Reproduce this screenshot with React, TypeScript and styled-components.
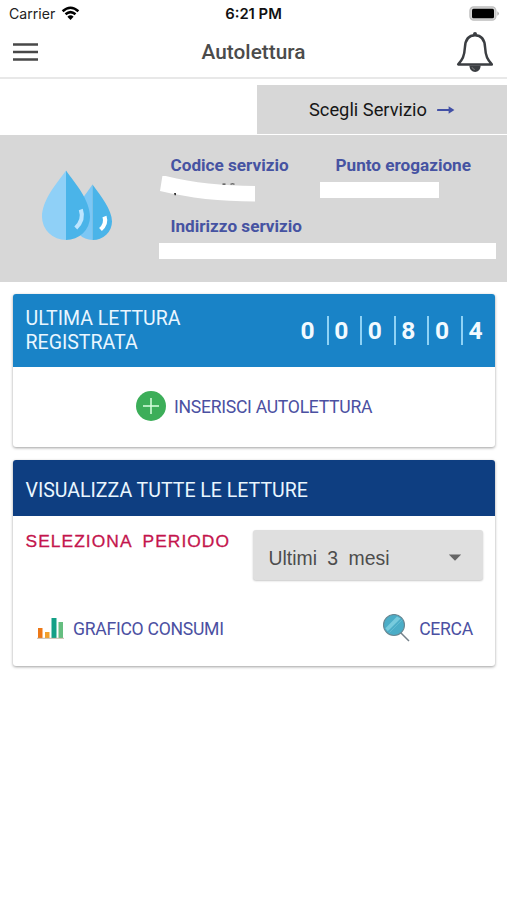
import React from "react";
import styled, { createGlobalStyle } from "styled-components";

const GlobalStyle = createGlobalStyle`
  * { box-sizing: border-box; }
  html, body { margin: 0; padding: 0; background: #fff; }
  body { font-family: Roboto, sans-serif; overflow: hidden; }
  svg { display: block; flex: none; }
`;

const Screen = styled.main`
  width: 507px;
  height: 900px;
  background: #fff;
  overflow: hidden;
`;

const StatusBar = styled.div`
  display: grid;
  grid-template-columns: 1fr auto 1fr;
  align-items: center;
  height: 27px;
  padding: 0 7px 0 9px;
  font-family: Inter, sans-serif;
  font-size: 14.1px;
  color: #222;
`;

const Carrier = styled.div`
  display: flex;
  align-items: center;
  gap: 6px;
`;

const Clock = styled.div`
  padding-right: 2px;
  font-size: 14.8px;
  font-weight: 600;
  color: #111;
`;

const BatterySlot = styled.div`
  display: flex;
  justify-content: flex-end;
`;

const Header = styled.header`
  display: grid;
  grid-template-columns: 1fr auto 1fr;
  align-items: center;
  height: 52px;
  padding: 0 13px;
  border-bottom: 2px solid #e8e8e8;
`;

const Title = styled.h1`
  margin: 0;
  font-size: 20.8px;
  line-height: 24px;
  font-weight: 500;
  color: #4b4b4b;
`;

const PlainButton = styled.button`
  display: flex;
  align-items: center;
  padding: 0;
  border: 0;
  background: none;
  font: inherit;
`;

const BellButton = styled(PlainButton)`
  justify-self: end;
`;

const ServiceButton = styled(PlainButton)`
  width: 250px;
  height: 49px;
  margin: 6px 0 0 auto;
  padding-left: 52px;
  gap: 10px;
  background: #d7d7d7;
  font-size: 18.3px;
  color: #161616;
`;

const ServicePanel = styled.section`
  display: flex;
  height: 147px;
  margin-top: 1px;
  background: #d7d7d7;
`;

const DropsSlot = styled.div`
  width: 158px;
  padding: 35px 0 0 41px;
`;

const ServiceInfo = styled.div`
  display: grid;
  grid-template-columns: 161px 176px;
  grid-template-rows: 61px 61px;
  padding-top: 19px;
`;

const Field = styled.div<{ $wide?: boolean; $indent: number }>`
  grid-column: ${(p) => (p.$wide ? "1 / 3" : "auto")};
  & > span {
    display: block;
    padding-left: ${(p) => p.$indent}px;
    line-height: 22px;
    font-size: 17.15px;
    font-weight: 700;
    color: #4653a2;
    white-space: nowrap;
  }
`;

const Redaction = styled.div<{ $w: number; $gap: number; $left: number }>`
  width: ${(p) => p.$w}px;
  height: 16px;
  margin: ${(p) => p.$gap}px 0 0 ${(p) => p.$left}px;
  background: #fff;
`;

const Card = styled.section<{ $height: number }>`
  width: 482px;
  height: ${(p) => p.$height}px;
  margin: 12px 0 0 13px;
  border-radius: 3px;
  background: #fff;
  overflow: hidden;
  box-shadow: 0 1px 3px rgba(0, 0, 0, 0.38);
  & + & { margin-top: 13px; }
`;

const CardHeader = styled.header<{ $bg: string; $height: number; $drop: number }>`
  display: flex;
  align-items: center;
  justify-content: space-between;
  height: ${(p) => p.$height}px;
  padding: ${(p) => p.$drop}px 12px 0 12.5px;
  background: ${(p) => p.$bg};
  color: #e9f6ff;
  font-size: 19.55px;
  line-height: 24.5px;
`;

const HeaderText = styled.div<{ $width: number }>`
  width: ${(p) => p.$width}px;
  padding-top: 1px;
`;

const Counter = styled.div`
  display: flex;
  align-items: center;
`;

const Digit = styled.span`
  width: 33.6px;
  height: 29px;
  padding-left: 5.5px;
  border-left: 2px solid #8ed2f5;
  font-size: 24.6px;
  line-height: 29px;
  font-weight: 700;
  color: #f2faff;
  &:first-child { border-left-color: transparent; }
  &:last-child { width: 22px; }
`;

const ActionButton = styled(PlainButton)<{ $gap: number }>`
  gap: ${(p) => p.$gap}px;
  font-size: 17.6px;
  letter-spacing: -0.28px;
  line-height: 22px;
  color: #4b50a2;
  white-space: nowrap;
  & > span { padding-top: 2px; }
`;

const InsertRow = styled.div`
  display: flex;
  height: 78px;
  padding-left: 122px;
`;

const PeriodRow = styled.div`
  display: flex;
  justify-content: space-between;
  height: 79px;
  padding: 14px 12px 0 12.5px;
`;

const PeriodLabel = styled.label`
  font-family: "Liberation Sans", sans-serif;
  font-size: 17.4px;
  line-height: 23px;
  letter-spacing: 1.05px;
  word-spacing: 5px;
  color: #c4154d;
  -webkit-text-stroke: 0.3px #c4154d;
  white-space: nowrap;
`;

const PeriodSelect = styled(PlainButton)`
  justify-content: space-between;
  width: 230px;
  height: 50px;
  padding: 4px 21px 0 15.5px;
  border-radius: 3px;
  background: #dfdfdf;
  box-shadow: 0 1px 2px rgba(0, 0, 0, 0.22);
  font-family: "Liberation Sans", sans-serif;
  font-size: 19.4px;
  word-spacing: 5px;
  color: #4d4d4d;
  & > span { padding-top: 2px; }
`;

const FooterRow = styled.div`
  display: flex;
  justify-content: space-between;
  height: 66px;
  padding: 0 22px 0 24px;
`;

const WifiIcon = () => (
  <svg width="19" height="15" viewBox="0 0 19 15">
    <path d="M1.6 5.2Q9.5-1.7 17.4 5.2M4.5 8.3q5-4.3 10 0" fill="none" stroke="#000" strokeWidth="2.5" />
    <path d="M6.4 10.7q3.1-2.7 6.2 0L9.5 14Z" />
  </svg>
);

const BatteryIcon = () => (
  <svg width="31" height="15" viewBox="0 0 31 15">
    <rect x=".9" y=".9" width="26" height="13.2" rx="3.8" fill="#d4d4d4" stroke="#bdbdbd" strokeWidth="1.2" />
    <rect x="3" y="2.8" width="22" height="9.4" rx="1.5" />
    <path d="M28.4 5.2q3 2.3 0 4.6Z" fill="#aaa" />
  </svg>
);

const MenuIcon = () => (
  <svg width="25" height="20" viewBox="0 0 25 20">
    <path d="M0 2.5h25M0 10h25M0 17.5h25" stroke="#484848" strokeWidth="2.5" />
  </svg>
);

const BellIcon = () => (
  <svg width="38" height="42" viewBox="0 0 38 42">
    <path d="M13.4 34.5c.2 8.5 11.2 8.5 11.2 0Z" fill="#3b3e42" />
    <path d="M16 36.2q.7 2.2 2.8 2.3" fill="none" stroke="#999" strokeWidth=".7" />
    <path
      d="M19 4.3C11.5 4.3 9.3 9.5 8.9 16.5 8.4 25.5 6.4 28.5 2.2 33.4h33.6C31.6 28.5 29.6 25.5 29.1 16.5 28.7 9.5 26.5 4.3 19 4.3Z"
      fill="#fff" stroke="#3b3e42" strokeWidth="2.5" strokeLinejoin="round"
    />
    <circle cx="19" cy="3" r="2" fill="#3b3e42" />
  </svg>
);

const ArrowIcon = () => (
  <svg width="18" height="10" viewBox="0 0 18 10">
    <path d="M1 5h13" stroke="#4250a6" strokeWidth="2.1" strokeLinecap="round" />
    <path d="M11.6 1.2 17.4 5l-5.8 3.8Z" fill="#4250a6" />
  </svg>
);

const DropsIcon = () => (
  <svg width="72" height="72" viewBox="0 0 72 72">
    <path d="M51.5 14.5C45 24 33 38 33 51a18.5 18.5 0 0 0 18.5 19Z" fill="#7cc7f5" />
    <path d="M51.5 14.5C60 26 71 40 71 51.5A19 18.5 0 0 1 51.5 70Z" fill="#4ab4e9" />
    <path d="M25 .5C16 13 1 30 1 47a24 23 0 0 0 24 23Z" fill="#8fd0f7" />
    <path d="M25 .5C34 13 49 30 49 47a24 23 0 0 1-24 23Z" fill="#4ab4e9" />
    <path d="M39.8 39.5q3.6 10.2-5 18.5" fill="none" stroke="#bce5ff" strokeWidth="4.2" />
    <path d="M63.5 46.5q2.4 7.3-4 13" fill="none" stroke="#fff" strokeWidth="4.2" />
  </svg>
);

/* Curved masking stroke over the service code, with the tips of the code still showing */
const CodeMask = () => (
  <svg width="97" height="28" viewBox="0 0 97 28">
    <path d="M4.5-.8C35 7 62 9.5 97 10v15.5C62 25.5 32 22 2 15Z" fill="#fff" />
    <path d="M16 16.9h2v2.3h-1.4Z" fill="#333" />
    <path d="M64.5 8.1h3M72.5 8.2q2-.8 4 0" fill="none" stroke="#444" strokeWidth="1.1" />
  </svg>
);

const PlusIcon = () => (
  <svg width="32" height="32" viewBox="0 0 32 32">
    <circle cx="16" cy="16" r="15" fill="#3cae59" />
    <path d="M8 16h16M16 8v16" stroke="#d8ffe0" strokeWidth="1.5" />
  </svg>
);

const CaretIcon = () => (
  <svg width="14" height="7" viewBox="0 0 14 7">
    <path d="M.8.5h12.4L7 6.7Z" fill="#666" />
  </svg>
);

const ChartIcon = () => (
  <svg width="27" height="22" viewBox="0 0 27 22">
    <path d="M1 11h4.5v10H1Z" fill="#ed7817" />
    <path d="M8 15h4.5v6H8Z" fill="#f2a02c" />
    <path d="M14.5 1h5v20h-5Z" fill="#14a086" />
    <path d="M21.5 5H26v16h-4.5Z" fill="#65be80" />
    <path d="M0 21.3h27" stroke="#b9a790" strokeWidth=".8" />
  </svg>
);

const MagnifierIcon = () => (
  <svg width="28" height="29" viewBox="0 0 28 29">
    <path d="m18.5 18.5 8.5 8.5" stroke="#75818a" strokeWidth="1.5" />
    <circle cx="12" cy="11" r="10.5" fill="#4badc7" stroke="#6a8792" strokeWidth="1.1" />
    <path d="M3.4 14.2 15 2.6l3.6 1.8L5.7 17.3Z" fill="#78cbdd" />
    <path d="m7.2 18.7 13-13" stroke="#65bdd3" strokeWidth="1" />
  </svg>
);

export default function App() {
  return (
    <Screen>
      <GlobalStyle />
      <StatusBar>
        <Carrier>Carrier<WifiIcon /></Carrier>
        <Clock>6:21 PM</Clock>
        <BatterySlot><BatteryIcon /></BatterySlot>
      </StatusBar>
      <Header>
        <PlainButton aria-label="Menu"><MenuIcon /></PlainButton>
        <Title>Autolettura</Title>
        <BellButton aria-label="Notifiche"><BellIcon /></BellButton>
      </Header>
      <ServiceButton>Scegli Servizio<ArrowIcon /></ServiceButton>
      <ServicePanel>
        <DropsSlot><DropsIcon /></DropsSlot>
        <ServiceInfo>
          <Field $indent={12.5}>
            <span>Codice servizio</span>
            <CodeMask />
          </Field>
          <Field $indent={16.5}>
            <span>Punto erogazione</span>
            <Redaction $w={119} $gap={6} $left={1} />
          </Field>
          <Field $wide $indent={12.5}>
            <span>Indirizzo servizio</span>
            <Redaction $w={337} $gap={6} $left={1} />
          </Field>
        </ServiceInfo>
      </ServicePanel>
      <Card $height={153}>
        <CardHeader $bg="#1983c7" $height={73} $drop={0}>
          <HeaderText $width={190}>ULTIMA LETTURA REGISTRATA</HeaderText>
          <Counter>
            {"000804".split("").map((digit, i) => <Digit key={i}>{digit}</Digit>)}
          </Counter>
        </CardHeader>
        <InsertRow>
          <ActionButton $gap={7}><PlusIcon /><span>INSERISCI AUTOLETTURA</span></ActionButton>
        </InsertRow>
      </Card>
      <Card $height={206}>
        <CardHeader $bg="#0e3e81" $height={56} $drop={5}>
          <HeaderText $width={320}>VISUALIZZA TUTTE LE LETTURE</HeaderText>
        </CardHeader>
        <PeriodRow>
          <PeriodLabel>SELEZIONA PERIODO</PeriodLabel>
          <PeriodSelect><span>Ultimi 3 mesi</span><CaretIcon /></PeriodSelect>
        </PeriodRow>
        <FooterRow>
          <ActionButton $gap={9}><ChartIcon /><span>GRAFICO CONSUMI</span></ActionButton>
          <ActionButton $gap={9}><MagnifierIcon /><span>CERCA</span></ActionButton>
        </FooterRow>
      </Card>
    </Screen>
  );
}
